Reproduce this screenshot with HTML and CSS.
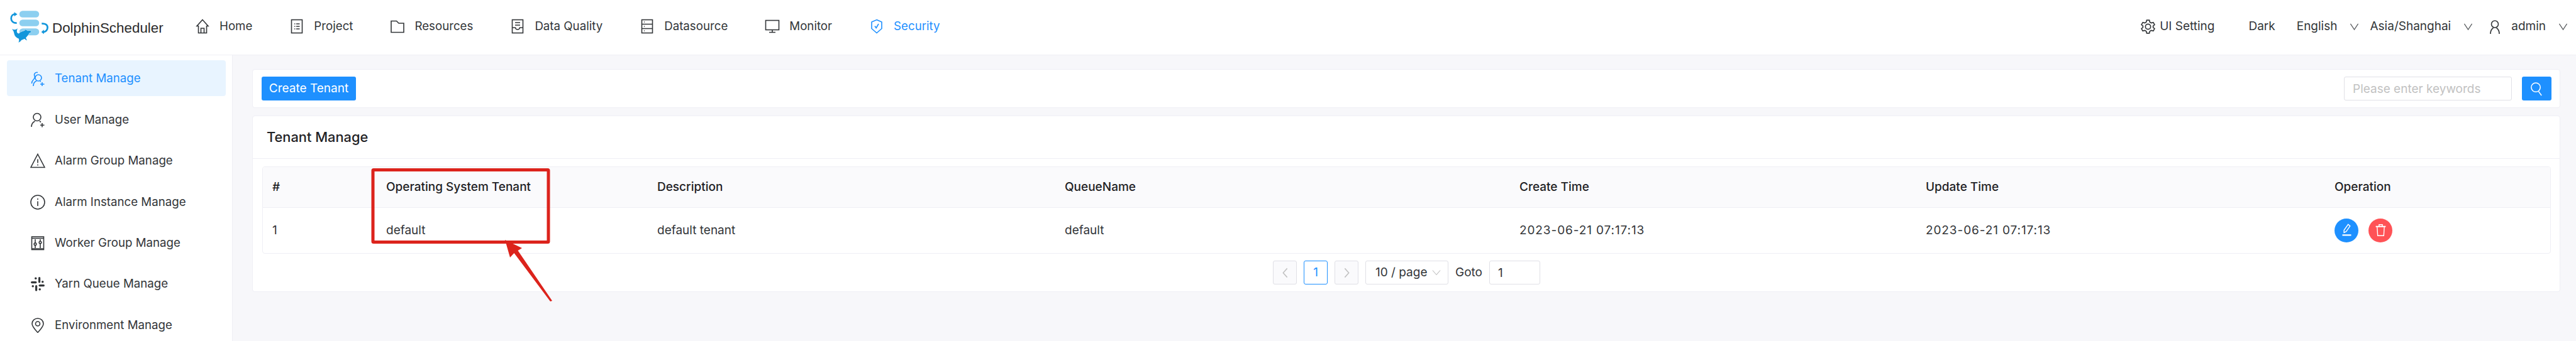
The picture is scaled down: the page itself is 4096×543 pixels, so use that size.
FILE: index.html
```html
<!DOCTYPE html>
<html lang="en">
<head>
<meta charset="utf-8">
<title>DolphinScheduler - Tenant Manage</title>
<link rel="stylesheet" href="styles.css">
</head>
<body>
<div class="app">
  <header class="topbar">
    <div class="brand">
      <svg class="logo" viewBox="22 24 92 80">
        <g fill="#8ccff0">
          <rect x="45" y="27" width="46" height="15.5" rx="7.7"/>
          <rect x="45" y="47.5" width="46" height="15.5" rx="7.7"/>
          <rect x="45" y="68" width="46" height="16" rx="8"/>
        </g>
        <g fill="none" stroke="#1296db" stroke-width="4">
          <path d="M39 55.5C31 56 26 51 26 45C26 39 30 35 35 35"/>
          <path d="M97 57C105 56 110.500 60 110.500 66C110.500 72 106 76.500 100 76.500"/>
        </g>
        <g fill="#1296db">
          <path d="M40.500 35L33 30V40Z"/>
          <path d="M96 76.500L102 71V81Z"/>
          <path stroke="#fff" stroke-width="1" paint-order="stroke" d="M28 69Q35 73 41 68Q38 74 40 78Q44 82 46 78Q52 74 58 73L57 71Q62 71 64 74Q70 73 73 75Q71 78 68 79Q66 84 60 90L63 96Q58 94 57 92Q53 94 50 95Q47 100 43 101Q45 96 44 92Q34 88 33 80Q32 74 28 69Z"/>
        </g>
      </svg>
      <span class="brand-name">DolphinScheduler</span>
    </div>
    <nav class="nav">
      <a class="nav-item"><svg class="icon" viewBox="0 0 24 24"><path d="M12 1.500L21 11.500H18.500V22.500H5.500V11.500H3Z"/><path d="M9.500 22.500V15H14.500V22.500"/></svg>Home</a>
      <a class="nav-item"><svg class="icon" viewBox="0 0 24 24"><rect x="3.500" y="1.500" width="17" height="21"/><path d="M8 8H9.500M11 8H16.500M8 12H9.500M11 12H16.500M8 16H9.500M11 16H16.500"/></svg>Project</a>
      <a class="nav-item"><svg class="icon" viewBox="0 0 24 24"><path d="M2 3.500H10.500L14 7H22V21.500H2Z"/></svg>Resources</a>
      <a class="nav-item"><svg class="icon" viewBox="0 0 24 24"><rect x="3.500" y="1.500" width="17" height="21"/><path d="M8 6H16M8 10H16M3.500 14H8.500C9 18 15 18 15.500 14H20.500"/></svg>Data Quality</a>
      <a class="nav-item"><svg class="icon" viewBox="0 0 24 24"><rect x="3.500" y="1.500" width="17" height="21"/><path d="M3.500 8.500H20.500M3.500 15.500H20.500M7 5H8M7 12H8M7 19H8"/></svg>Datasource</a>
      <a class="nav-item"><svg class="icon" viewBox="0 0 24 24"><rect x="1.500" y="2.500" width="21" height="15"/><path d="M12 17.500V21.500M7 21.500H17"/></svg>Monitor</a>
      <a class="nav-item is-active"><svg class="icon" viewBox="0 0 24 24"><path d="M12 1.500L20 5V15.500L12 22.500L4 15.500V5Z"/><path d="M9 11.500L11.200 14.500L15 8"/></svg>Security</a>
    </nav>
    <div class="tools">
      <a class="tool tool-setting"><svg class="icon" viewBox="0 0 24 24"><path d="M10 2H14L14.700 5L17 6.300L20 5.400L22 9L19.800 11V13.100L22 15L20 18.600L17 17.700L14.700 19L14 22H10L9.300 19L7 17.700L4 18.600L2 15L4.200 13.100V11L2 9L4 5.400L7 6.300L9.300 5Z"/><circle cx="12" cy="12" r="4"/></svg>UI Setting</a>
      <a class="tool tool-dark">Dark</a>
      <a class="tool tool-lang">English<svg class="chev" viewBox="0 0 16 16"><path d="M1.500 3L8 13L14.500 3"/></svg></a>
      <a class="tool tool-zone">Asia/Shanghai<svg class="chev" viewBox="0 0 16 16"><path d="M1.500 3L8 13L14.500 3"/></svg></a>
      <a class="tool tool-user"><svg class="icon icon-user" viewBox="0 0 16 24"><circle cx="8" cy="7.500" r="5.500"/><path d="M1 23C1 18 3 15 5.500 13.500M15 23C15 18 13 15 10.500 13.500"/></svg>admin<svg class="chev" viewBox="0 0 16 16"><path d="M1.500 3L8 13L14.500 3"/></svg></a>
    </div>
  </header>

  <div class="body">
    <aside class="sidebar">
      <a class="side-item is-active"><svg class="icon" viewBox="0 0 24 24"><circle cx="13" cy="10" r="5"/><path d="M5 23C5 19 7 16 10 15M12 1.500C8 0.500 5.500 4 7 7C8 9.500 7 11 5 13C3 15 2.500 17 2.500 19M15.500 15.500L17 16M19 17V23M16 20H22.500"/></svg>Tenant Manage</a>
      <a class="side-item"><svg class="icon" viewBox="0 0 24 24"><circle cx="11" cy="7.500" r="6"/><path d="M2 23C2 18 4.500 15.500 7.500 14M15 14L17 15.500M19 17V23.500M16 20.300H22.500"/></svg>User Manage</a>
      <a class="side-item"><svg class="icon" viewBox="0 0 24 24"><path d="M12 1.500L23 22.500H1Z"/><path d="M12 9.500V15.500M12 17.800V19.500"/></svg>Alarm Group Manage</a>
      <a class="side-item"><svg class="icon" viewBox="0 0 24 24"><circle cx="12" cy="12" r="11"/><path d="M12 10.500V18M12 6V8"/></svg>Alarm Instance Manage</a>
      <a class="side-item"><svg class="icon" viewBox="0 0 24 24"><rect x="2.500" y="2" width="19" height="20.500"/><path d="M2.500 4.500H21.500M2.500 21H21.500M8 6V12M8 15.500V20M16 6V9M16 13V20"/><circle cx="8" cy="13.700" r="1.800"/><circle cx="16" cy="11" r="1.800"/></svg>Worker Group Manage</a>
      <a class="side-item"><svg class="icon icon-filled" viewBox="0 0 24 24"><rect x="13" y="1" width="3.200" height="9.500" rx="1.600"/><rect x="18" y="7" width="3.500" height="3.500" rx="1.700"/><rect x="1" y="8" width="9.500" height="3.200" rx="1.600"/><rect x="7" y="1.500" width="3.500" height="3.500" rx="1.700"/><rect x="8" y="14" width="3.200" height="9.500" rx="1.600"/><rect x="2.500" y="14" width="3.500" height="3.500" rx="1.700"/><rect x="13.500" y="13" width="9.500" height="3.200" rx="1.600"/><rect x="13.500" y="19" width="3.500" height="3.500" rx="1.700"/></svg>Yarn Queue Manage</a>
      <a class="side-item"><svg class="icon" viewBox="0 0 24 24"><path d="M12 23.500C7 18 3 14 3 9.500C3 4.500 7 1 12 1C17 1 21 4.500 21 9.500C21 14 17 18 12 23.500Z"/><circle cx="12" cy="9.500" r="3.500"/></svg>Environment Manage</a>
    </aside>

    <main class="main">
      <section class="card toolbar">
        <button class="btn btn-primary">Create Tenant</button>
        <div class="search">
          <input class="field field-search" placeholder="Please enter keywords">
          <button class="btn btn-primary btn-search"><svg class="icon icon-white" viewBox="0 0 24 24"><circle cx="10.500" cy="9.500" r="7.500"/><path d="M15 16L20 23"/></svg></button>
        </div>
      </section>

      <section class="card panel">
        <h2 class="panel-title">Tenant Manage</h2>
        <div class="panel-body">
          <div class="table-wrap">
            <table class="table">
              <colgroup>
                <col class="c-index"><col class="c-name"><col class="c-desc"><col class="c-queue"><col class="c-create"><col class="c-update"><col class="c-op">
              </colgroup>
              <thead>
                <tr><th>#</th><th>Operating System Tenant</th><th>Description</th><th>QueueName</th><th>Create Time</th><th>Update Time</th><th>Operation</th></tr>
              </thead>
              <tbody>
                <tr>
                  <td>1</td><td>default</td><td>default tenant</td><td>default</td><td class="date">2023-06-21 07:17:13</td><td class="date">2023-06-21 07:17:13</td>
                  <td>
                    <div class="ops">
                      <button class="round round-edit"><svg class="icon icon-white" viewBox="0 0 24 24"><path d="M7 16.500V12L14.500 1.500L18 4.500L11 14.500Z"/><path d="M4 21H20" class="thick"/></svg></button>
                      <button class="round round-del"><svg class="icon icon-white" viewBox="0 0 24 24"><path d="M3 5.500H21" class="thick"/><path d="M9 5V2H15V5M5.500 6L6.500 22H17.500L18.500 6"/></svg></button>
                    </div>
                  </td>
                </tr>
              </tbody>
            </table>
          </div>
          <div class="pager">
            <button class="page page-off"><svg class="page-arrow" viewBox="0 0 16 24"><path d="M12 3L4 12L12 21"/></svg></button>
            <button class="page page-on">1</button>
            <button class="page page-off"><svg class="page-arrow" viewBox="0 0 16 24"><path d="M4 3L12 12L4 21"/></svg></button>
            <div class="page-size">10 / page<svg class="size-chev" viewBox="0 0 16 16"><path d="M1 4L8 12L15 4"/></svg></div>
            <span class="goto">Goto</span>
            <input class="field field-goto" value="1">
          </div>
        </div>
      </section>
    </main>
  </div>

  <svg class="annotation" viewBox="0 0 4096 543">
    <rect class="mark-box" x="593" y="270.500" width="279" height="115" rx="1"/>
    <path class="mark-arrow" d="M803 382L830 395L823.500 399L878 479L875 480L817.500 403L811 410Z"/>
  </svg>
</div>
</body>
</html>
```

FILE: styles.css
```css
* { box-sizing: border-box; }

html, body {
  margin: 0;
  height: 100%;
  overflow: hidden;
  background: #f7f7fa;
}

body {
  font-family: Inter, "Liberation Sans", sans-serif;
  font-size: 19px;
  line-height: 1.5;
  color: #333639;
}

.app {
  position: relative;
  height: 543px;
  display: flex;
  flex-direction: column;
  overflow: hidden;
}

a { color: inherit; }

.icon {
  width: 24px;
  height: 24px;
  flex: none;
  fill: none;
  stroke: currentColor;
  stroke-width: 1.6;
}

.icon-filled { fill: currentColor; stroke: none; }
.icon-white { color: #fff; }
.thick { stroke-width: 2.4; }

/* top bar */
.topbar {
  flex: none;
  height: 88px;
  display: flex;
  align-items: center;
  background: #fff;
  border-bottom: 1px solid #efeff5;
  padding: 0 13px 2px 15px;
}

.brand {
  display: flex;
  align-items: center;
  width: 295px;
  flex: none;
}

.logo {
  width: 63px;
  height: 55px;
  flex: none;
}

.brand-name {
  font-family: "Liberation Sans", Arial, sans-serif;
  font-size: 22.4px;
  color: #2b2b2b;
  margin-left: 5px;
  position: relative;
  top: 2px;
}

.nav {
  display: flex;
  align-items: center;
  gap: 59px;
  font-size: 18.700px;
}

.nav-item {
  display: flex;
  align-items: center;
  gap: 15px;
}

.nav-item.is-active { color: #1e90ff; }

.tools {
  margin-left: auto;
  display: flex;
  align-items: center;
}

.tool {
  display: flex;
  align-items: center;
}

.tool-setting { gap: 6px; }
.tool-setting .icon { width: 25px; height: 25px; }
.tool-dark { margin-left: 54px; }
.tool-lang { margin-left: 34px; }
.tool-zone { margin-left: 17px; }
.tool-user { margin-left: 27px; }
.icon-user { width: 16px; height: 24px; margin-right: 18px; }

.chev {
  width: 15px;
  height: 15px;
  flex: none;
  margin-left: 20px;
  fill: none;
  stroke: #55585b;
  stroke-width: 1.3;
}

/* layout below the bar */
.body {
  flex: 1;
  min-height: 0;
  display: flex;
}

.sidebar {
  flex: none;
  width: 370px;
  background: #fff;
  border-right: 1px solid #efeff5;
  padding: 8px 10px 0 11px;
  display: flex;
  flex-direction: column;
  gap: 8.400px;
  font-size: 18.700px;
}

.side-item {
  flex: none;
  height: 57px;
  display: flex;
  align-items: center;
  gap: 15px;
  padding: 2px 0 0 37px;
  border-radius: 4px;
}

.side-item.is-active {
  background: #e8f4ff;
  color: #1e90ff;
}

.main {
  flex: 1;
  min-width: 0;
  padding: 22px 25px 0 31px;
  display: flex;
  flex-direction: column;
  gap: 12px;
}

/* cards */
.card {
  background: #fff;
  border: 1px solid #efeff5;
  border-radius: 4px;
}

.toolbar {
  height: 62px;
  padding: 0 13px 0 14px;
  display: flex;
  align-items: center;
  justify-content: space-between;
}

.search {
  display: flex;
  gap: 16px;
}

.btn {
  height: 38px;
  padding: 0;
  border: 0;
  border-radius: 3px;
  font: inherit;
  display: flex;
  align-items: center;
  justify-content: center;
}

.btn-primary {
  width: 150px;
  background: #1e90ff;
  color: #fff;
}

.btn-search { width: 47px; }
.btn-search .icon { width: 23px; height: 23px; }

.field {
  height: 38px;
  border: 1px solid #e0e0e6;
  border-radius: 3px;
  background: #fff;
  font: inherit;
  color: #333639;
  padding: 0 13px;
  outline: none;
}

.field::placeholder { color: #c2c2c2; opacity: 1; }
.field-search { width: 267px; }
.field-goto { width: 81px; }

.panel {
  height: 281px;
}

.panel-title {
  margin: 0;
  height: 68px;
  padding: 0 22px;
  display: flex;
  align-items: center;
  font-size: 21.800px;
  font-weight: 500;
  color: #1f2225;
  border-bottom: 1px solid #efeff5;
}

.panel-body {
  padding: 12px 14px 0 15px;
}

.table-wrap {
  border: 1px solid #efeff5;
  border-radius: 4px;
  overflow: hidden;
}

.table {
  width: 100%;
  table-layout: fixed;
  border-collapse: collapse;
}

.c-index { width: 181px; }
.c-name { width: 431px; }
.c-desc { width: 648px; }
.c-queue { width: 723px; }
.c-create { width: 646px; }
.c-update { width: 650px; }

.table th, .table td {
  padding: 0 15px;
  text-align: left;
  white-space: nowrap;
}

.table th {
  height: 64px;
  background: #fafafc;
  font-weight: 500;
  color: #1f2225;
  border-bottom: 1px solid #efeff5;
}

.table td { height: 73px; }
.table .date { letter-spacing: 0.9px; }

.ops {
  display: flex;
  gap: 16px;
}

.round {
  width: 38px;
  height: 38px;
  padding: 0;
  border: 0;
  border-radius: 50%;
  display: flex;
  align-items: center;
  justify-content: center;
}

.round .icon { width: 21px; height: 21px; }
.round-edit { background: #1e90ff; }
.round-del { background: #ff5256; }

/* pagination */
.pager {
  margin-top: 11px;
  display: flex;
  align-items: center;
  justify-content: center;
  gap: 11px;
}

.page {
  width: 38px;
  height: 38px;
  padding: 0;
  border: 1px solid #e0e0e6;
  border-radius: 3px;
  background: #fff;
  font: inherit;
  color: #1e90ff;
  display: flex;
  align-items: center;
  justify-content: center;
}

.page-off { background: #fafafc; }
.page-on { border-color: #1e90ff; }

.page-arrow {
  width: 13px;
  height: 19px;
  fill: none;
  stroke: #c2c2c2;
  stroke-width: 2;
}

.page-size {
  width: 132px;
  height: 38px;
  padding-left: 15px;
  border: 1px solid #e0e0e6;
  border-radius: 3px;
  display: flex;
  align-items: center;
  gap: 8px;
}

.size-chev {
  width: 14px;
  height: 14px;
  fill: none;
  stroke: #c2c2c2;
  stroke-width: 1.3;
}

/* red review marks drawn on top of the screenshot */
.annotation {
  position: absolute;
  left: 0;
  top: 0;
  width: 4096px;
  height: 543px;
  pointer-events: none;
}

.mark-box {
  fill: none;
  stroke: #dc231c;
  stroke-width: 5;
}

.mark-arrow { fill: #dc231c; }
```
